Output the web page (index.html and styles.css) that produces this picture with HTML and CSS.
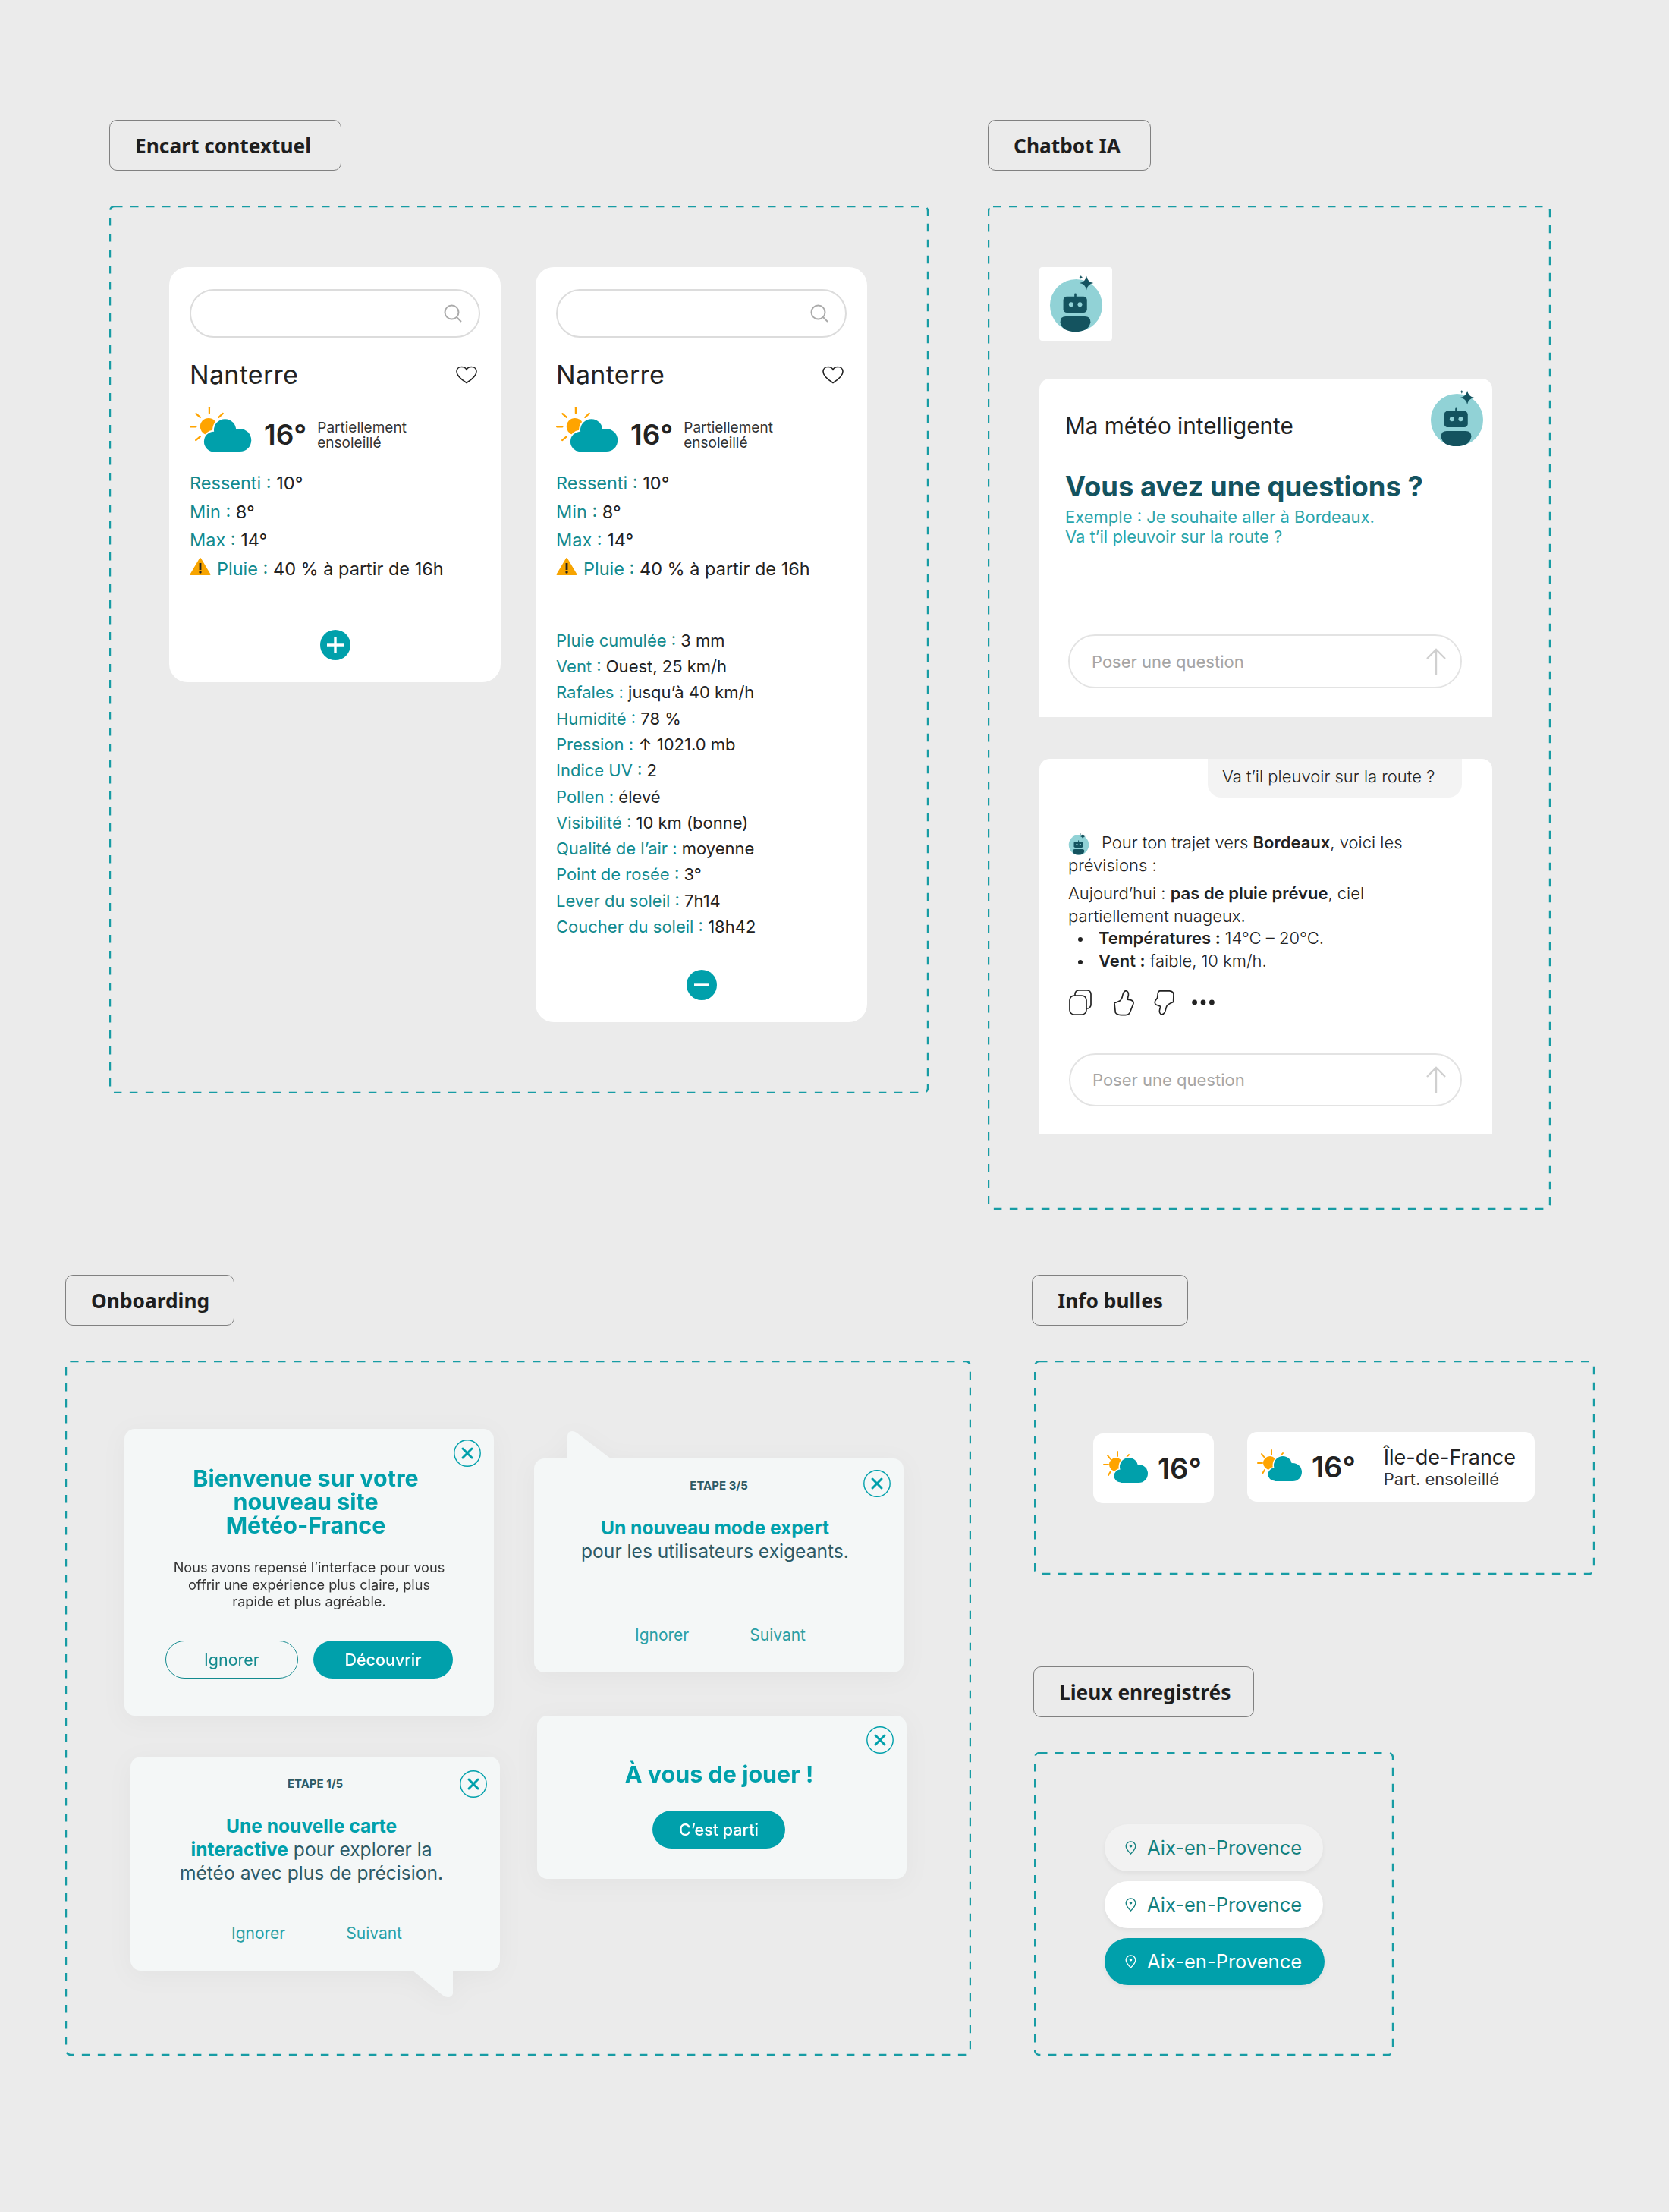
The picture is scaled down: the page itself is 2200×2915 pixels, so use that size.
FILE: index.html
```html
<!DOCTYPE html>
<html lang="fr">
<head>
    <meta charset="UTF-8">
    <meta name="viewport" content="width=device-width, initial-scale=1.0">
    <title>Météo-France composants</title>
    <link rel="stylesheet" href="styles.css">
</head>
<body>
    <!-- shared icons -->
    <svg class="sprite" aria-hidden="true">
        <symbol id="weather" viewBox="20 10 265 195">
            <g stroke="#ffa400" stroke-width="7" stroke-linecap="round">
                <line x1="105" y1="17" x2="105" y2="40"/>
                <line x1="50" y1="42" x2="67" y2="57"/>
                <line x1="27" y1="96" x2="50" y2="96"/>
                <line x1="49" y1="152" x2="67" y2="137"/>
                <line x1="161" y1="41" x2="144" y2="57"/>
            </g>
            <circle cx="102" cy="95" r="35" fill="#ffa400"/>
            <g fill="#fff" stroke="#fff" stroke-width="12">
                <circle cx="125" cy="158" r="42"/>
                <circle cx="170" cy="110" r="46"/>
                <circle cx="232" cy="152" r="47"/>
            </g>
            <g fill="#00a0ab">
                <circle cx="125" cy="158" r="42"/>
                <circle cx="170" cy="110" r="46"/>
                <circle cx="232" cy="152" r="47"/>
                <rect x="125" y="130" width="107" height="69"/>
            </g>
        </symbol>
        <symbol id="weather-small" viewBox="0 0 59 42">
            <g stroke="#ffa400" stroke-width="2" stroke-linecap="round">
                <line x1="19" y1="1" x2="19" y2="7"/>
                <line x1="6" y1="6" x2="10" y2="11"/>
                <line x1="1" y1="18" x2="7" y2="18"/>
                <line x1="7" y1="32" x2="10" y2="27"/>
                <line x1="34" y1="5" x2="30" y2="10"/>
            </g>
            <circle cx="17" cy="18" r="9" fill="#ffa400"/>
            <g fill="#fff" stroke="#fff" stroke-width="3">
                <circle cx="34" cy="21" r="12"/>
                <circle cx="23" cy="33" r="8.5"/>
            </g>
            <g fill="#00a0ab">
                <circle cx="34" cy="21" r="12"/>
                <circle cx="23" cy="33" r="8.5"/>
                <circle cx="47" cy="30" r="12"/>
                <rect x="23" y="30" width="24" height="12"/>
            </g>
        </symbol>
        <symbol id="robot" viewBox="65 60 220 235">
            <circle cx="175" cy="188" r="104" fill="#91d2d6"/>
            <path fill="#14535f" d="M216 71 Q220 95 244 99 Q220 103 216 127 Q212 103 188 99 Q212 95 216 71Z"/>
            <path fill="#14535f" d="M194 69 Q195 75 201 76 Q195 77 194 83 Q193 77 187 76 Q193 75 194 69Z"/>
            <rect x="168" y="140" width="8" height="16" rx="4" fill="#14535f"/>
            <rect x="124" y="153" width="94" height="64" rx="14" fill="#14535f"/>
            <circle cx="155" cy="184" r="9" fill="#91d2d6"/>
            <circle cx="190" cy="184" r="9" fill="#91d2d6"/>
            <path fill="#14535f" d="M134 232 H210 Q232 232 232 254 Q226 292 172 292 Q118 292 112 254 Q112 232 134 232Z"/>
        </symbol>
        <symbol id="close" viewBox="0 0 36 36">
            <circle cx="18" cy="18" r="17.2" fill="none" stroke="#00a0ab" stroke-width="1.4"/>
            <path d="M12 12 L24 24 M24 12 L12 24" fill="none" stroke="#00a0ab" stroke-width="3" stroke-linecap="round"/>
        </symbol>
        <symbol id="search" viewBox="0 0 24 24">
            <circle cx="10.5" cy="10.5" r="9" fill="none" stroke="#aaa" stroke-width="2"/>
            <line x1="17" y1="17" x2="23" y2="23" stroke="#aaa" stroke-width="2"/>
        </symbol>
        <symbol id="heart" viewBox="0 0 28 24">
            <path d="M14 22.5 C6 17.5 1 13 1 7.5 C1 3.5 4 1.5 7.5 1.5 C10.5 1.5 13 3 14 5 C15 3 17.5 1.5 20.5 1.5 C24 1.5 27 3.5 27 7.5 C27 13 22 17.5 14 22.5Z" fill="none" stroke="#222" stroke-width="1.6"/>
        </symbol>
        <symbol id="warning" viewBox="0 0 28 25">
            <path d="M14 2 L26.5 23 H1.5Z" fill="#f7a400" stroke="#f7a400" stroke-width="2" stroke-linejoin="round"/>
            <rect x="12.6" y="8" width="2.8" height="9" fill="#222"/>
            <circle cx="14" cy="20" r="1.7" fill="#222"/>
        </symbol>
        <symbol id="send" viewBox="0 0 28 36">
            <path d="M14 35 V2 M2 14 L14 2 L26 14" fill="none" stroke="#d0d0d0" stroke-width="2.4"/>
        </symbol>
        <symbol id="pin" viewBox="0 0 16 20">
            <path d="M8 1 C4 1 1 4 1 7.5 C1 12 8 19 8 19 C8 19 15 12 15 7.5 C15 4 12 1 8 1Z" fill="none" stroke="currentColor" stroke-width="1.5"/>
            <circle cx="8" cy="7.5" r="2" fill="currentColor"/>
        </symbol>
    </svg>

    <div class="row row-top">
        <section class="block block-encart">
            <div class="tag">Encart contextuel</div>
            <div class="frame frame-encart">
                <svg class="dash"><rect/></svg>

                <div class="weather-card">
                    <div class="search"><svg class="search-icon"><use href="#search"/></svg></div>
                    <div class="city-row">
                        <span class="city">Nanterre</span>
                        <svg class="heart"><use href="#heart"/></svg>
                    </div>
                    <div class="now">
                        <svg class="now-icon"><use href="#weather"/></svg>
                        <span class="now-temp">16°</span>
                        <span class="now-desc">Partiellement<br>ensoleillé</span>
                    </div>
                    <ul class="facts">
                        <li><b>Ressenti :</b> 10°</li>
                        <li><b>Min :</b> 8°</li>
                        <li><b>Max :</b> 14°</li>
                        <li class="fact-warn"><svg class="warn-icon"><use href="#warning"/></svg><span><b>Pluie :</b> 40 % à partir de 16h</span></li>
                    </ul>
                    <button class="round-btn round-btn-plus">
                        <svg viewBox="0 0 40 40"><path d="M9 20 H31 M20 9 V31"/></svg>
                    </button>
                </div>

                <div class="weather-card">
                    <div class="search"><svg class="search-icon"><use href="#search"/></svg></div>
                    <div class="city-row">
                        <span class="city">Nanterre</span>
                        <svg class="heart"><use href="#heart"/></svg>
                    </div>
                    <div class="now">
                        <svg class="now-icon"><use href="#weather"/></svg>
                        <span class="now-temp">16°</span>
                        <span class="now-desc">Partiellement<br>ensoleillé</span>
                    </div>
                    <ul class="facts">
                        <li><b>Ressenti :</b> 10°</li>
                        <li><b>Min :</b> 8°</li>
                        <li><b>Max :</b> 14°</li>
                        <li class="fact-warn"><svg class="warn-icon"><use href="#warning"/></svg><span><b>Pluie :</b> 40 % à partir de 16h</span></li>
                    </ul>
                    <hr class="card-rule">
                    <ul class="details">
                        <li><b>Pluie cumulée :</b> 3 mm</li>
                        <li><b>Vent :</b> Ouest, 25 km/h</li>
                        <li><b>Rafales :</b> jusqu’à 40 km/h</li>
                        <li><b>Humidité :</b> 78 %</li>
                        <li><b>Pression :</b> ↑ 1021.0 mb</li>
                        <li><b>Indice UV :</b> 2</li>
                        <li><b>Pollen :</b> élevé</li>
                        <li><b>Visibilité :</b> 10 km (bonne)</li>
                        <li><b>Qualité de l’air :</b> moyenne</li>
                        <li><b>Point de rosée :</b> 3°</li>
                        <li><b>Lever du soleil :</b> 7h14</li>
                        <li><b>Coucher du soleil :</b> 18h42</li>
                    </ul>
                    <button class="round-btn round-btn-minus">
                        <svg viewBox="0 0 40 40"><path d="M10 20 H30"/></svg>
                    </button>
                </div>
            </div>
        </section>

        <section class="block block-chat">
            <div class="tag">Chatbot IA</div>
            <div class="frame frame-chat">
                <svg class="dash"><rect/></svg>

                <div class="bot-tile"><svg class="bot-big"><use href="#robot"/></svg></div>

                <div class="chat-card chat-card-empty">
                    <div class="chat-head">
                        <span class="chat-name">Ma météo intelligente</span>
                        <svg class="bot-big"><use href="#robot"/></svg>
                    </div>
                    <h2 class="chat-title">Vous avez une questions ?</h2>
                    <p class="chat-hint">Exemple : Je souhaite aller à Bordeaux.<br>Va t’il pleuvoir sur la route ?</p>
                    <div class="ask ask-empty">
                        <span>Poser une question</span>
                        <svg class="send"><use href="#send"/></svg>
                    </div>
                </div>

                <div class="chat-card chat-card-reply">
                    <div class="bubble">Va t’il pleuvoir sur la route ?</div>
                    <p class="answer answer-first"><svg class="bot-small"><use href="#robot"/></svg>Pour ton trajet vers <b>Bordeaux</b>, voici les<br>prévisions :</p>
                    <p class="answer">Aujourd’hui : <b>pas de pluie prévue</b>, ciel<br>partiellement nuageux.</p>
                    <ul class="answer-list">
                        <li><b>Températures :</b> 14°C – 20°C.</li>
                        <li><b>Vent :</b> faible, 10 km/h.</li>
                    </ul>
                    <div class="chat-tools">
                        <svg class="tool-copy" viewBox="0 0 30 34"><rect x="1" y="8" width="22" height="25" rx="6"/><path d="M8 8 V6 a5 5 0 0 1 5-5 h11 a5 5 0 0 1 5 5 v14 a5 5 0 0 1-5 5 h-1"/></svg>
                        <svg class="tool-thumb" viewBox="230 38 88 106"><path d="M236 92 Q250 88 260 82 Q268 72 270 56 Q275 43 283 43 Q293 46 292 60 L288 78 L302 80 Q314 84 312 94 L300 124 Q296 140 280 140 L262 140 Q244 138 240 130 Z"/></svg>
                        <svg class="tool-thumb tool-down" viewBox="384 38 88 110"><path d="M410 44 L450 44 Q468 46 467 60 L466 90 Q445 98 438 108 L431 132 Q424 144 414 140 Q406 134 410 120 L413 108 L396 102 Q385 94 392 84 L400 72 L402 54 Q404 44 410 44Z"/></svg>
                        <svg class="tool-more" viewBox="0 0 30 34"><circle cx="3.6" cy="17" r="3.4"/><circle cx="15" cy="17" r="3.4"/><circle cx="26.4" cy="17" r="3.4"/></svg>
                    </div>
                    <div class="ask ask-reply">
                        <span>Poser une question</span>
                        <svg class="send"><use href="#send"/></svg>
                    </div>
                </div>
            </div>
        </section>
    </div>

    <div class="row row-bottom">
        <section class="block block-onboarding">
            <div class="tag">Onboarding</div>
            <div class="frame frame-onboarding">
                <svg class="dash"><rect/></svg>

                <div class="onb-col onb-col-left">
                    <div class="onb-card onb-welcome">
                        <svg class="onb-close"><use href="#close"/></svg>
                        <h3 class="onb-title">Bienvenue sur votre<br>nouveau site<br>Météo-France</h3>
                        <p class="onb-text">Nous avons repensé l’interface pour vous<br>offrir une expérience plus claire, plus<br>rapide et plus agréable.</p>
                        <div class="onb-buttons">
                            <button class="pill-btn pill-btn-ghost">Ignorer</button>
                            <button class="pill-btn pill-btn-fill">Découvrir</button>
                        </div>
                    </div>
                    <div class="onb-card onb-step onb-step-one">
                        <svg class="onb-close"><use href="#close"/></svg>
                        <svg class="tail tail-down" viewBox="0 0 54 37"><path d="M0 0 H54 V31 Q53 36 47 36 Q43 36 40 33 Z"/></svg>
                        <div class="onb-count">ETAPE 1/5</div>
                        <p class="onb-lead"><b>Une nouvelle carte<br>interactive</b> pour explorer la<br>météo avec plus de précision.</p>
                        <div class="onb-links"><span>Ignorer</span><span>Suivant</span></div>
                    </div>
                </div>

                <div class="onb-col onb-col-right">
                    <div class="onb-card onb-step onb-step-three">
                        <svg class="onb-close"><use href="#close"/></svg>
                        <svg class="tail tail-up" viewBox="0 0 58 38"><path d="M0 38 V7 Q1 1 6 1 Q9 1 12 3 L58 38 Z"/></svg>
                        <div class="onb-count">ETAPE 3/5</div>
                        <p class="onb-lead"><b>Un nouveau mode expert</b><br>pour les utilisateurs exigeants.</p>
                        <div class="onb-links"><span>Ignorer</span><span>Suivant</span></div>
                    </div>
                    <div class="onb-card onb-last">
                        <svg class="onb-close"><use href="#close"/></svg>
                        <h3 class="onb-title onb-title-last">À vous de jouer !</h3>
                        <button class="pill-btn pill-btn-fill pill-btn-go">C’est parti</button>
                    </div>
                </div>
            </div>
        </section>

        <div class="side">
            <section class="block block-tips">
                <div class="tag">Info bulles</div>
                <div class="frame frame-tips">
                    <svg class="dash"><rect/></svg>
                    <div class="tip tip-short">
                        <svg class="tip-icon"><use href="#weather-small"/></svg>
                        <span class="tip-temp">16°</span>
                    </div>
                    <div class="tip tip-long">
                        <svg class="tip-icon"><use href="#weather-small"/></svg>
                        <span class="tip-temp">16°</span>
                        <div class="tip-place">
                            <div class="tip-region">Île-de-France</div>
                            <div class="tip-sky">Part. ensoleillé</div>
                        </div>
                    </div>
                </div>
            </section>

            <section class="block block-places">
                <div class="tag">Lieux enregistrés</div>
                <div class="frame frame-places">
                    <svg class="dash"><rect/></svg>
                    <div class="place place-hover"><svg class="pin"><use href="#pin"/></svg>Aix-en-Provence</div>
                    <div class="place"><svg class="pin"><use href="#pin"/></svg>Aix-en-Provence</div>
                    <div class="place place-active"><svg class="pin"><use href="#pin"/></svg>Aix-en-Provence</div>
                </div>
            </section>
        </div>
    </div>
</body>
</html>
```
FILE: styles.css
```css
body {
    margin: 0;
    width: 2200px;
    height: 2915px;
    background: #ebebeb;
    font-family: Inter, "Liberation Sans", sans-serif;
    color: #222;
    overflow: hidden;
}

ul, p, h2, h3 {
    margin: 0;
    padding: 0;
}

ul {
    list-style: none;
}

button {
    font-family: inherit;
    border: none;
    padding: 0;
}

.sprite {
    position: absolute;
    width: 0;
    height: 0;
}

.row {
    display: flex;
    align-items: flex-start;
}

.row-top {
    padding: 158px 0 0 144px;
    height: 1680px;
    box-sizing: border-box;
    gap: 78px;
}

.row-bottom {
    padding-left: 86px;
    gap: 82px;
}

.block {
    display: flex;
    flex-direction: column;
    align-items: flex-start;
}

.tag {
    height: 67px;
    padding-left: 33px;
    display: flex;
    align-items: center;
    box-sizing: border-box;
    border: 1px solid #808080;
    border-radius: 10px;
    font-family: "Noto Sans", sans-serif;
    font-size: 26.3px;
    font-weight: 700;
    color: #1e1e1e;
}

.block-encart .tag {
    width: 306px;
}

.block-chat .tag {
    width: 215px;
}

.block-onboarding .tag {
    width: 223px;
}

.block-tips .tag {
    width: 206px;
    margin-left: -2px;
}

.block-places .tag {
    width: 291px;
}

.frame {
    position: relative;
    margin-top: 46px;
    box-sizing: border-box;
}

/* dashed outline, css dashed borders can't do these dash lengths */
.dash {
    position: absolute;
    left: 0;
    top: 0;
    width: 100%;
    height: 100%;
    pointer-events: none;
}

.dash rect {
    x: 1px;
    y: 1px;
    width: calc(100% - 2px);
    height: calc(100% - 2px);
    rx: 6px;
    fill: none;
    stroke: #179ca4;
    stroke-width: 2.4;
    stroke-dasharray: 10.5 10.5;
}

/* encart */
.frame-encart {
    width: 1080px;
    height: 1170px;
    padding: 81px 0 0 79px;
    display: flex;
    align-items: flex-start;
    gap: 46px;
}

.weather-card {
    width: 437px;
    box-sizing: border-box;
    padding: 29px 27px 29px;
    background: #fff;
    border-radius: 24px;
}

.search {
    height: 64px;
    box-sizing: border-box;
    border: 2px solid #dcdcdc;
    border-radius: 32px;
    display: flex;
    align-items: center;
    justify-content: flex-end;
    padding-right: 22px;
}

.search-icon {
    width: 24px;
    height: 24px;
}

.city-row {
    margin-top: 28px;
    height: 40px;
    display: flex;
    align-items: center;
    justify-content: space-between;
    padding-right: 4px;
}

.city {
    font-size: 34px;
    letter-spacing: 0.3px;
}

.heart {
    width: 28px;
    height: 24px;
    margin-top: 2px;
}

.now {
    margin: 22px 0 0 -2px;
    height: 62px;
    display: flex;
    align-items: center;
}

.now-icon {
    width: 86px;
    height: 62px;
}

.now-temp {
    margin: 12px 0 0 14px;
    font-size: 37px;
    font-weight: 600;
}

.now-desc {
    margin: 16px 0 0 14px;
    font-size: 19px;
    line-height: 20px;
    color: #333;
}

.facts {
    margin-top: 21px;
    font-size: 23.5px;
    line-height: 37.7px;
}

.facts b, .details b {
    font-weight: 400;
    color: #138a8e;
}

.fact-warn {
    display: flex;
    align-items: center;
    gap: 8px;
}

.warn-icon {
    width: 28px;
    height: 25px;
    margin-top: -6px;
}

.round-btn {
    display: block;
    width: 40px;
    height: 40px;
    margin: 60px auto 0;
    border-radius: 50%;
    background: #00a0ab;
}

.round-btn svg {
    display: block;
}

.round-btn path {
    fill: none;
    stroke: #fff;
    stroke-width: 3.4;
}

.round-btn-plus {
    margin-top: 61px;
}

.round-btn-minus {
    margin-top: 40px;
}

.card-rule {
    width: 337px;
    height: 1px;
    margin: 29px 0 0;
    border: none;
    background: #e4e4e4;
}

.details {
    margin-top: 28px;
    font-size: 22px;
    line-height: 34.3px;
}

/* chatbot */
.frame-chat {
    width: 742px;
    height: 1323px;
    padding: 81px 0 0 68px;
}

.bot-tile {
    width: 96px;
    height: 97px;
    box-sizing: border-box;
    padding: 8px 0 0 12px;
    background: #fff;
    border-radius: 4px;
}

.bot-big {
    display: block;
    width: 73px;
    height: 78px;
}

.chat-card {
    width: 597px;
    box-sizing: border-box;
    margin-top: 50px;
    background: #fff;
    border-radius: 14px 14px 0 0;
}

.chat-card-empty {
    height: 446px;
    padding: 12px 0 0 34px;
}

.chat-head {
    display: flex;
    justify-content: space-between;
    padding-right: 10px;
}

.chat-name {
    margin-top: 28px;
    font-size: 29.7px;
    line-height: 44px;
    color: #222;
}

.chat-title {
    margin-top: 29px;
    font-size: 36.4px;
    line-height: 46px;
    font-weight: 700;
    color: #14535f;
}

.chat-hint {
    margin-top: 4px;
    font-size: 22px;
    line-height: 26px;
    color: #2ba5ab;
}

.ask {
    box-sizing: border-box;
    width: 519px;
    border: 2px solid #e3e3e3;
    border-radius: 36px;
    display: flex;
    align-items: center;
    justify-content: space-between;
    padding: 0 18px 0 29px;
    font-size: 22px;
    color: #a5a5a5;
}

.ask-empty {
    margin: 116px 0 0 4px;
    height: 71px;
}

.send {
    width: 28px;
    height: 36px;
}

.chat-card-reply {
    height: 495px;
    margin-top: 55px;
    padding-left: 38px;
}

.bubble {
    box-sizing: border-box;
    width: 335px;
    height: 51px;
    margin-left: 184px;
    padding: 0 0 6px 19px;
    display: flex;
    align-items: center;
    background: #f3f3f3;
    border-radius: 0 0 18px 18px;
    font-size: 22px;
    font-weight: 300;
    color: #222;
}

.answer {
    font-size: 22px;
    line-height: 29.5px;
    font-weight: 300;
    margin-top: 8px;
}

.answer b, .answer-list b {
    font-weight: 600;
}

.answer-first {
    margin-top: 45px;
}

.bot-small {
    width: 28px;
    height: 30px;
    margin: -8px 16px -8px 0;
    vertical-align: middle;
}

.answer-list {
    padding-left: 13px;
    font-size: 22px;
    line-height: 29.5px;
    font-weight: 300;
}

.answer-list li::before {
    content: "";
    display: inline-block;
    width: 6px;
    height: 6px;
    margin-right: 21px;
    border-radius: 50%;
    background: #222;
    vertical-align: middle;
}

.chat-tools {
    display: flex;
    align-items: center;
    gap: 24px;
    margin: 23px 0 0 1px;
    height: 34px;
}

.chat-tools svg {
    fill: none;
    stroke: #222;
    stroke-linejoin: round;
}

.tool-copy {
    width: 30px;
    height: 34px;
    margin-right: 4px;
    stroke-width: 1.7;
}

.tool-thumb {
    width: 29px;
    height: 35px;
    stroke-width: 5;
}

.tool-down {
    margin-right: -2px;
}

.chat-tools .tool-more {
    width: 30px;
    height: 34px;
    fill: #222;
    stroke: none;
}

.ask-reply {
    margin: 50px 0 0 1px;
    height: 70px;
    width: 518px;
}

/* onboarding */
.frame-onboarding {
    width: 1194px;
    height: 916px;
    padding: 90px 0 0 78px;
    display: flex;
    gap: 45px;
}

.onb-col {
    display: flex;
    flex-direction: column;
    align-items: flex-start;
}

.onb-col-left {
    width: 495px;
}

.onb-card {
    position: relative;
    width: 487px;
    box-sizing: border-box;
    background: #f4f7f7;
    border-radius: 14px;
    filter: drop-shadow(0 6px 16px rgba(0, 0, 0, 0.035));
    text-align: center;
}

.onb-close {
    position: absolute;
    top: 14px;
    right: 17px;
    width: 36px;
    height: 36px;
}

.onb-welcome {
    height: 378px;
    padding-top: 49px;
}

.onb-title {
    padding-right: 9px;
    font-size: 30.5px;
    line-height: 31px;
    font-weight: 700;
    color: #00a0ab;
}

.onb-text {
    margin-top: 29px;
    font-size: 18.2px;
    line-height: 22.5px;
    color: #333;
}

.onb-buttons {
    display: flex;
    justify-content: center;
    gap: 20px;
    margin-top: 40px;
}

.pill-btn {
    height: 50px;
    box-sizing: border-box;
    border-radius: 25px;
    font-size: 21.5px;
}

.pill-btn-ghost {
    width: 175px;
    background: transparent;
    border: 1.7px solid #138a8e;
    color: #138a8e;
}

.pill-btn-fill {
    width: 184px;
    background: #00a0ab;
    color: #fff;
    font-weight: 500;
}

.onb-step {
    height: 282px;
    padding: 26px 0 34px;
    display: flex;
    flex-direction: column;
}

.onb-step-one {
    margin: 54px 0 0 8px;
}

.onb-step-one .onb-close {
    top: 18px;
}

.onb-step-three {
    margin-top: 39px;
}

.onb-step-three .onb-close {
    top: 15px;
}

.onb-count {
    font-size: 15px;
    line-height: 20px;
    font-weight: 700;
    color: #2d5a66;
}

.onb-lead {
    margin-top: 30px;
    padding-right: 10px;
    font-size: 24.6px;
    line-height: 31px;
    color: #2d5a66;
}

.onb-lead b {
    font-weight: 700;
    color: #00a0ab;
}

.onb-links {
    margin-top: auto;
    padding-left: 4px;
    display: flex;
    justify-content: center;
    gap: 80px;
    font-size: 21px;
    line-height: 30px;
    color: #2a9fa5;
}

.tail {
    position: absolute;
    fill: #f4f7f7;
}

.tail-up {
    left: 44px;
    top: -37px;
    width: 58px;
    height: 38px;
}

.tail-down {
    left: 371px;
    bottom: -36px;
    width: 54px;
    height: 37px;
}

.onb-last {
    height: 215px;
    margin: 57px 0 0 4px;
    padding-top: 57px;
}

.onb-title-last {
    padding-right: 7px;
    line-height: 40px;
}

.pill-btn-go {
    display: block;
    width: 175px;
    margin: 28px 0 0 152px;
}

/* side column */
.side {
    display: flex;
    flex-direction: column;
    gap: 121px;
}

.frame-tips {
    width: 739px;
    height: 282px;
    margin-left: 1px;
    padding: 94px 0 0 78px;
    display: flex;
    align-items: flex-start;
    gap: 44px;
}

.tip {
    height: 92px;
    box-sizing: border-box;
    background: #fff;
    border-radius: 13px;
    display: flex;
    align-items: center;
    padding-left: 13px;
}

.tip-short {
    width: 159px;
    margin-top: 2px;
}

.tip-long {
    width: 379px;
}

.tip-icon {
    width: 59px;
    height: 42px;
    margin-top: -4px;
}

.tip-temp {
    margin-left: 13px;
    font-size: 38px;
    font-weight: 600;
}

.tip-place {
    margin-left: 37px;
    margin-top: 2px;
}

.tip-region {
    font-size: 27px;
    line-height: 30px;
}

.tip-sky {
    font-size: 22px;
    line-height: 26px;
    color: #333;
}

.frame-places {
    width: 474px;
    height: 400px;
    margin-left: 1px;
    padding: 95px 0 0 93px;
    display: flex;
    flex-direction: column;
    align-items: flex-start;
    gap: 13.5px;
}

.place {
    width: 288px;
    height: 61.5px;
    box-sizing: border-box;
    padding-left: 27px;
    display: flex;
    align-items: center;
    gap: 14px;
    background: #fff;
    border-radius: 31px;
    box-shadow: 0 3px 6px rgba(0, 0, 0, 0.05);
    font-size: 25.5px;
    color: #13807f;
}

.place-hover {
    background: #f2f2f2;
}

.place-active {
    width: 290px;
    background: #00a0ab;
    color: #fff;
}

.pin {
    width: 15px;
    height: 18px;
}
```
